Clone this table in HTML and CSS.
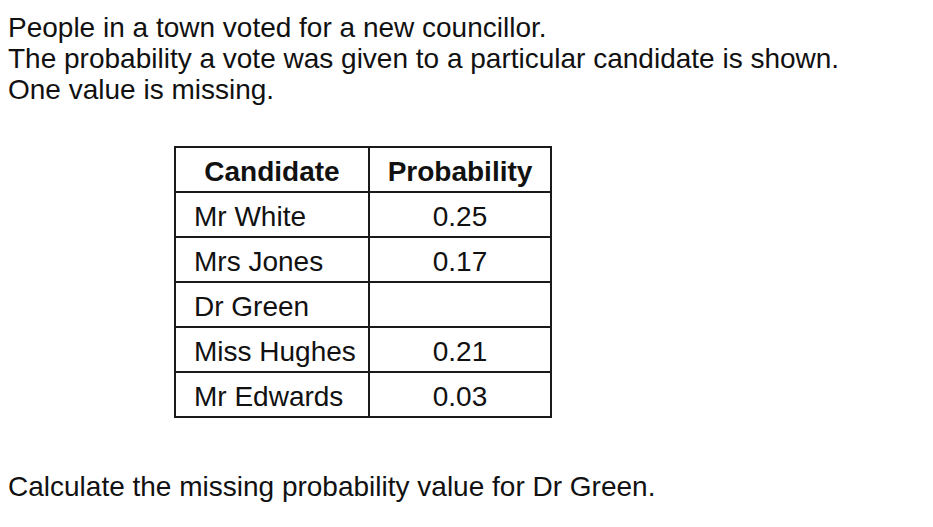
FILE: index.html
```html
<!DOCTYPE html>
<html lang="en">
<head>
<meta charset="utf-8">
<title>Councillor vote probability</title>
<link rel="stylesheet" href="styles.css">
</head>
<body>
<div class="intro">
  <p class="line">People in a town voted for a new councillor.</p>
  <p class="line">The probability a vote was given to a particular candidate is shown.</p>
  <p class="line">One value is missing.</p>
</div>
<table class="prob-table">
  <thead>
    <tr><th class="col-name">Candidate</th><th class="col-prob">Probability</th></tr>
  </thead>
  <tbody>
    <tr><td class="name">Mr White</td><td class="prob">0.25</td></tr>
    <tr><td class="name">Mrs Jones</td><td class="prob">0.17</td></tr>
    <tr><td class="name">Dr Green</td><td class="prob"></td></tr>
    <tr><td class="name">Miss Hughes</td><td class="prob">0.21</td></tr>
    <tr><td class="name">Mr Edwards</td><td class="prob">0.03</td></tr>
  </tbody>
</table>
<p class="question">Calculate the missing probability value for Dr Green.</p>
</body>
</html>
```
FILE: styles.css
```css
html, body {
  background: #ffffff;
}
body {
  margin: 0;
  padding: 12px 8px 0 8px;
  font-family: "Liberation Sans", Arial, sans-serif;
  font-size: 28px;
  color: #111111;
}
.intro .line {
  margin: 0;
  line-height: 31px;
}
.prob-table {
  margin: 41px 0 0 166px;
  border-collapse: collapse;
  border: 2px solid #1a1a1a;
}
.prob-table th,
.prob-table td {
  border: 2px solid #1a1a1a;
  height: 40px;
  padding: 3px 0 0 0;
  font-size: 28px;
  line-height: 31px;
}
.prob-table th {
  font-weight: bold;
  text-align: center;
}
.col-name { width: 192px; }
.col-prob { width: 180px; }
.prob-table td.name {
  text-align: left;
  padding-left: 18px;
}
.prob-table td.prob {
  text-align: center;
}
.question {
  margin: 53px 0 0 0;
  line-height: 31px;
}
```
